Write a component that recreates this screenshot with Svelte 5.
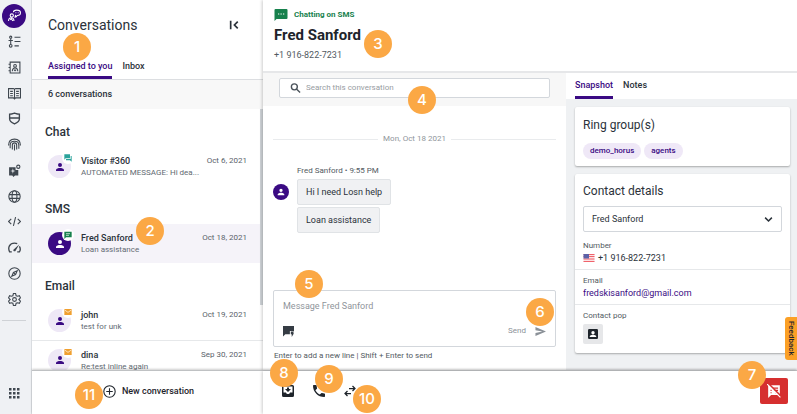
<script>
  let tab = $state('Assigned to you')
  let side_tab = $state('Snapshot')
  let search = $state('')
  let message = $state('')
  let contact = $state('Fred Sanford')

  const groups = [
    {
      title: 'Chat',
      items: [
        { name: 'Visitor #360', text: 'AUTOMATED MESSAGE: Hi dea...', date: 'Oct 6, 2021', kind: 'chat' }
      ]
    },
    {
      title: 'SMS',
      items: [
        { name: 'Fred Sanford', text: 'Loan assistance', date: 'Oct 18, 2021', kind: 'sms', active: true }
      ]
    },
    {
      title: 'Email',
      items: [
        { name: 'john', text: 'test for unk', date: 'Oct 19, 2021', kind: 'mail' },
        { name: 'dina', text: 'Re:test inline again', date: 'Sep 30, 2021', kind: 'mail' }
      ]
    }
  ]

  const messages = ['Hi I need Losn help', 'Loan assistance']

  // tour pins that float over the page
  const pins = [
    { n: 1, x: 77, y: 47 },
    { n: 2, x: 150, y: 231 },
    { n: 3, x: 378, y: 44 },
    { n: 4, x: 422, y: 100 },
    { n: 5, x: 309, y: 284 },
    { n: 6, x: 540, y: 312 },
    { n: 7, x: 752, y: 375 },
    { n: 8, x: 284, y: 373 },
    { n: 9, x: 329, y: 379 },
    { n: 10, x: 367, y: 399 },
    { n: 11, x: 89, y: 395 }
  ]

  const nav = ['Chats', 'Tasks', 'Contacts', 'Library', 'Shield', 'Identity', 'Plugins', 'Web', 'Code', 'Dashboard', 'Explore', 'Settings']
</script>

{#snippet person()}
  <svg viewBox="0 0 24 24"><path fill="currentColor" d="M12 12a4 4 0 1 0 0-8 4 4 0 0 0 0 8zm0 2c-2.700 0-8 1.300-8 4v2h16v-2c0-2.700-5.300-4-8-4z" /></svg>
{/snippet}

{#snippet kindIcon(kind)}
  {#if kind === 'mail'}
    <svg class="kind" viewBox="0 0 24 24"><path fill="#f0a030" d="M1 3h22v18H1z" /><path d="M2 6l10 7 10-7" fill="none" stroke="#fff" stroke-width="2" /></svg>
  {:else if kind === 'sms'}
    <svg class="kind" viewBox="0 0 24 24"><path fill="#17814d" d="M1 2h22v17H6l-5 5z" /><path d="M6 8h12M6 13h9" stroke="#fff" stroke-width="2" /></svg>
  {:else}
    <svg class="kind" viewBox="0 0 24 24"><path fill="#2aa39b" d="M1 1h17v12H5l-4 4zM20 6h3v17l-5-4H6v-4h14z" /></svg>
  {/if}
{/snippet}

{#snippet navIcon(name)}
  <svg viewBox="0 0 24 24" fill="none" stroke="currentColor" stroke-width="2">
    {#if name === 'Chats'}
      <circle cx="7" cy="12" r="3" />
      <path d="M1 22c0-4 2-6 5-6 4 0 5 2 5 6M4 20l2-2 3 4M10 6c0-2 2-4 6-4s7 2 7 5-3 5-6 5c-1 2-3 3-4 3l1-4" />
      <path d="M13 7h1M16 7h1M19 7h1" />
    {:else if name === 'Tasks'}
      <circle cx="5" cy="4" r="2" /><circle cx="5" cy="20" r="2.500" />
      <path d="M5 6v11M1 10h8M12 4h11M12 12h11M12 20h8" />
    {:else if name === 'Contacts'}
      <path d="M4 2h18v20H4zM1 6h4M1 12h4M1 18h4" />
      <circle cx="13" cy="9" r="2.500" /><path d="M8 19c0-4 2-6 5-6s5 2 5 6M11 16l2 2 2-2" />
    {:else if name === 'Library'}
      <path d="M1 3h9l2 1 2-1h9v17h-9l-2 2-2-2H1zM12 4v17M4 8h5M4 12h5M4 16h5M15 8h5M15 12h5M15 16h5" />
    {:else if name === 'Shield'}
      <path d="M3 4c4 0 6-1 9-2 3 1 5 2 9 2v9c0 5-4 7-9 9-5-2-9-4-9-9zM3 11h18" stroke-width="2.500" />
    {:else if name === 'Identity'}
      <path d="M1 14C1 6 6 2 12 2s11 4 11 12M4 19v-6c0-4 3-7 8-7s8 3 8 7v7M8 21v-8c0-2 1-4 4-4s4 2 4 4v8M12 12v11" />
    {:else if name === 'Plugins'}
      <path fill="currentColor" stroke="none" fill-rule="evenodd" d="M2 6h12v5h5v10h-6l-3 3-2-3H2zM9 8l-1 4-4 1 4 1 1 4 1-4 4-1-4-1z" />
      <circle cx="19" cy="5" r="3" />
    {:else if name === 'Web'}
      <circle cx="12" cy="12" r="10.500" /><ellipse cx="12" cy="12" rx="4.500" ry="10.500" /><path d="M2 8.500h20M2 15.500h20" />
    {:else if name === 'Code'}
      <path d="M6 7l-5 5 5 5M18 7l5 5-5 5M14 4l-4 16" />
    {:else if name === 'Dashboard'}
      <path d="M7 20H3C-1 12 3 4 12 4c2 0 3 0 5 1M21 10c2 3 2 7 0 10h-4" stroke-width="2.500" /><path fill="currentColor" stroke="none" d="M21 6l-7 12c-1 2-5 1-4-2z" />
    {:else if name === 'Explore'}
      <circle cx="12" cy="12" r="10.500" /><path d="M17 7l-3 7-7 3 3-7zM11 11l2 2" />
    {:else}
      <path d="M10 1h4l1 4 3 1 3-1 2 4-3 3 3 3-2 4-3-1-3 1-1 4h-4l-1-4-3-1-3 1-2-4 3-3-3-3 2-4 3 1 3-1z" /><circle cx="12" cy="12" r="3.500" />
    {/if}
  </svg>
{/snippet}

<div class="app">
  <nav class="rail">
    <ul>
      {#each nav as name, i}
        <li><button class:current={i === 0} aria-label={name}>{@render navIcon(name)}</button></li>
      {/each}
    </ul>
    <hr />
    <button class="apps" aria-label="Apps">
      <svg viewBox="0 0 24 24" fill="currentColor">
        {#each [2, 10, 18] as y}
          {#each [2, 10, 18] as x}
            <rect {x} {y} width="5" height="5" />
          {/each}
        {/each}
      </svg>
    </button>
  </nav>

  <div class="content">
    <div class="workspace">
      <section class="list">
        <header>
          <h1>Conversations</h1>
          <button class="collapse" aria-label="Collapse">
            <svg viewBox="0 0 24 24" fill="none" stroke="currentColor" stroke-width="4"><path d="M4 2v20M21 4l-8 8 8 8" /></svg>
          </button>
        </header>
        <div class="tabs">
          {#each ['Assigned to you', 'Inbox'] as t}
            <button class:selected={tab === t} onclick={() => (tab = t)}>{t}</button>
          {/each}
        </div>
        <p class="count">6 conversations</p>
        <div class="scroll">
          {#each groups as g}
            <h2>{g.title}</h2>
            {#each g.items as c}
              <a class="conversation" class:active={c.active} href="#{c.kind}">
                <span class="avatar">
                  {@render person()}
                  <span class="badge">{@render kindIcon(c.kind)}</span>
                </span>
                <span class="summary">
                  <strong>{c.name}</strong>
                  <span>{c.text}</span>
                </span>
                <time>{c.date}</time>
              </a>
            {/each}
          {/each}
          <div class="thumb"></div>
        </div>
      </section>

      <main>
        <header class="contact">
          <p class="channel">
            <svg viewBox="0 0 26 24"><path fill="#17814d" d="M2 0h22q2 0 2 2v16q0 2-2 2H4l-4 4V2q0-2 2-2z" /><path d="M7 10h2.500M12 10h2.500M17 10h2.500" stroke="#fff" stroke-width="2" /></svg>
            Chatting on SMS
          </p>
          <h2>Fred Sanford</h2>
          <p class="phone">+1 916-822-7231</p>
        </header>

        <div class="columns">
          <section class="chat">
            <div class="search">
              <label>
                <svg viewBox="0 0 24 24" fill="none" stroke="currentColor" stroke-width="3"><circle cx="9.500" cy="9.500" r="6.500" /><path d="M14 14l8 8" /></svg>
                <input type="text" aria-label="Search" placeholder="Search this conversation" bind:value={search} />
              </label>
            </div>
            <p class="day">Mon, Oct 18 2021</p>
            <div class="thread">
              <span class="sender">{@render person()}</span>
              <div class="bubbles">
                <p class="meta">Fred Sanford • 9:55 PM</p>
                {#each messages as m}
                  <p class="bubble">{m}</p>
                {/each}
              </div>
            </div>
            <div class="composer">
              <textarea aria-label="Message" placeholder="Message Fred Sanford" bind:value={message}></textarea>
              <div class="tools">
                <button aria-label="Canned replies">
                  <svg viewBox="0 0 24 24"><path fill="#353c44" d="M0 0h24v11h-9v7H5l-5 5z" /><path fill="#353c44" d="M17 12h7l-2 4h2l-5 8v-6h-2z" /></svg>
                </button>
                <button class="send">
                  Send
                  <svg viewBox="0 0 24 24"><path fill="currentColor" d="M1 22l23-10L1 2v7l15 3-15 3z" /></svg>
                </button>
              </div>
            </div>
            <p class="hint">Enter to add a new line | Shift + Enter to send</p>
          </section>

          <aside>
            <div class="tabs">
              {#each ['Snapshot', 'Notes'] as t}
                <button class:selected={side_tab === t} onclick={() => (side_tab = t)}>{t}</button>
              {/each}
            </div>
            <div class="cards">
              <div class="card rings">
                <h3>Ring group(s)</h3>
                <div class="chips">
                  <span>demo_horus</span>
                  <span>agents</span>
                </div>
              </div>
              <div class="card">
                <div class="block">
                  <h3>Contact details</h3>
                  <div class="picker">
                    <select aria-label="Contact" bind:value={contact}>
                      <option>Fred Sanford</option>
                    </select>
                    <svg viewBox="0 0 24 24" fill="none" stroke="currentColor" stroke-width="4"><path d="M3 7l9 9 9-9" /></svg>
                  </div>
                  <h4>Number</h4>
                  <p class="value">
                    <svg class="flag" viewBox="0 0 22 16">
                      <rect width="22" height="16" fill="#fbe3e5" />
                      <path d="M0 1h22M0 5h22M0 10h22M0 15h22" stroke="#f0636b" stroke-width="2" />
                      <rect width="11" height="9" fill="#5b62a8" />
                    </svg>
                    +1 916-822-7231
                  </p>
                </div>
                <div class="block">
                  <h4>Email</h4>
                  <p class="value"><a href="mailto:fredskisanford@gmail.com">fredskisanford@gmail.com</a></p>
                </div>
                <div class="block">
                  <h4>Contact pop</h4>
                  <button class="pop" aria-label="Contact pop">
                    <svg viewBox="0 0 24 24"><rect width="24" height="24" rx="3" fill="#1e242b" /><circle cx="12" cy="9" r="4" fill="#fff" /><path fill="#fff" d="M4 19c0-3 4-5 8-5s8 2 8 5z" /></svg>
                  </button>
                </div>
              </div>
            </div>
          </aside>
        </div>
      </main>
    </div>

    <footer>
      <div class="create">
        <button>
          <svg viewBox="0 0 24 24" fill="none" stroke="currentColor" stroke-width="2"><circle cx="12" cy="12" r="10.500" /><path d="M12 6v12M6 12h12" /></svg>
          New conversation
        </button>
      </div>
      <div class="actions">
        <button aria-label="Move to inbox">
          <svg viewBox="0 0 24 24"><path fill="currentColor" fill-rule="evenodd" d="M3 0h18q3 0 3 3v18q0 3-3 3H3q-3 0-3-3V3q0-3 3-3zM3 3v12h5c1 4 7 4 8 0h5V3zM10 5h4v3h4l-6 6-6-6h4z" /></svg>
        </button>
        <button aria-label="Call">
          <svg viewBox="3 3 18 18"><path fill="currentColor" d="M6.600 10.800c1.400 2.800 3.800 5.100 6.600 6.600l2.200-2.200c.3-.3.7-.4 1-.2 1.100.4 2.300.6 3.600.6.600 0 1 .4 1 1V20c0 .6-.4 1-1 1C10.600 21 3 13.400 3 4c0-.6.4-1 1-1h3.500c.6 0 1 .4 1 1 0 1.300.2 2.500.6 3.600.1.300 0 .7-.2 1z" /></svg>
        </button>
        <button aria-label="Transfer">
          <svg viewBox="0 0 24 24" fill="none" stroke="currentColor" stroke-width="2.500"><path d="M10 7h12M17 2l5 5-5 5M14 17H2M7 12l-5 5 5 5" /></svg>
        </button>
        <button class="end" aria-label="End chat">
          <svg viewBox="0 0 24 24"><path fill="#fff" d="M2 2h20v17H7l-5 5z" /><path d="M10 7h9M11 11h8M6 11h2M6 15h2M14 15h2" stroke="#d62f2f" stroke-width="2" /><path d="M3 0l21 21" stroke="#d62f2f" stroke-width="3" /><path d="M0 0l23 23" stroke="#fff" stroke-width="2" /></svg>
        </button>
      </div>
    </footer>
  </div>

  <button class="feedback">Feedback</button>

  {#each pins as p}
    <span class="pin" style="left: {p.x}px; top: {p.y}px">{p.n}</span>
  {/each}
</div>

<style>
  :global(body) {
    font-family: Roboto, 'Liberation Sans', sans-serif;
    font-size: 9px;
    line-height: 12px;
    color: #2b323a;
  }

  h1, h2, h3, h4, p, ul, hr {
    margin: 0;
    padding: 0;
  }

  button {
    display: flex;
    align-items: center;
    padding: 0;
    border: 0;
    background: none;
    color: inherit;
    font: inherit;
    cursor: pointer;
  }

  svg {
    display: block;
    width: 12px;
    height: 12px;
    flex: none;
  }

  .app {
    position: relative;
    display: flex;
    height: 100vh;
    overflow: hidden;
  }

  .rail {
    display: flex;
    flex-direction: column;
    align-items: center;
    width: 32px;
    flex: none;
    box-sizing: border-box;
    padding: 3px 3px 15px 0;
    background: #eff1f4;
    border-right: 1px solid #d9dce0;
    color: #3f474f;
  }

  .rail ul {
    display: flex;
    flex-direction: column;
    height: 309px;
    list-style: none;
  }

  .rail li {
    display: flex;
    flex: 1;
    align-items: center;
    justify-content: center;
  }

  .rail li svg {
    width: 13px;
    height: 13px;
  }

  .rail .current {
    justify-content: center;
    width: 24px;
    height: 24px;
    border-radius: 50%;
    background: #3a0a83;
    color: #fff;
  }

  .rail hr {
    width: 24px;
    margin-top: 8px;
    border: 0;
    border-top: 1px solid #cfd2d6;
  }

  .apps {
    margin-top: auto;
  }

  .content {
    display: flex;
    flex: 1;
    flex-direction: column;
    min-width: 0;
  }

  .workspace {
    display: flex;
    flex: 1;
    min-height: 0;
  }

  .list {
    display: flex;
    flex-direction: column;
    width: 231px;
    flex: none;
  }

  .list header {
    display: flex;
    align-items: center;
    justify-content: space-between;
    padding: 14px 24px 14px 16px;
  }

  h1 {
    font-size: 14px;
    line-height: 22px;
    font-weight: 400;
  }

  .collapse svg {
    width: 10px;
    height: 10px;
  }

  .tabs {
    display: flex;
    gap: 10px;
    font-weight: 500;
  }

  .tabs button {
    align-items: flex-start;
    box-sizing: border-box;
    border-bottom: 3px solid transparent;
  }

  .tabs .selected {
    color: #3a0a83;
    border-color: #3a0a83;
  }

  .list .tabs {
    padding: 10px 16px 0;
    border-bottom: 1px solid #dcdee1;
  }

  .list .tabs button {
    height: 19px;
  }

  .count {
    padding: 8px 16px 9px;
    background: #f8f8f8;
    font-weight: 500;
  }

  .scroll {
    position: relative;
    flex: 1;
    min-height: 0;
    overflow: hidden;
  }

  .scroll h2 {
    padding: 16px 13px 8px;
    font-size: 12px;
    line-height: 14px;
    font-weight: 500;
  }

  .thumb {
    position: absolute;
    top: 0;
    right: 0;
    width: 3px;
    height: 75%;
    background: #cfd3d7;
  }

  .conversation {
    display: flex;
    align-items: center;
    gap: 10px;
    height: 39px;
    box-sizing: border-box;
    padding: 0 16px;
    color: inherit;
    text-decoration: none;
  }

  .conversation + .conversation {
    border-top: 1px solid #e6e8ea;
  }

  .conversation.active {
    background: #f5f3f9;
  }

  .avatar {
    position: relative;
    display: flex;
    align-items: center;
    justify-content: center;
    width: 23px;
    height: 23px;
    border-radius: 50%;
    background: #eee8f6;
    color: #3a0a83;
  }

  .active .avatar {
    background: #3a0a83;
    color: #fff;
  }

  .badge {
    position: absolute;
    top: -3px;
    right: -3px;
    padding: 2px;
    border-radius: 50%;
    background: #fff;
  }

  .kind {
    width: 8px;
    height: 8px;
  }

  .summary {
    display: flex;
    flex: 1;
    flex-direction: column;
    min-width: 0;
    padding-top: 1px;
    font-size: 8px;
    color: #626a72;
  }

  .summary strong {
    font-size: 9px;
    font-weight: 500;
    color: #2b323a;
  }

  .summary span {
    white-space: nowrap;
  }

  time {
    align-self: flex-start;
    padding-top: 8px;
    font-size: 8px;
    color: #5a626a;
  }

  main {
    position: relative;
    display: flex;
    flex: 1;
    flex-direction: column;
    min-width: 0;
    box-shadow: -1px 0 3px rgba(0, 0, 0, 0.2);
  }

  .contact {
    padding: 9px 11px 10px;
    border-bottom: 2px solid #e6e7e9;
  }

  .channel {
    display: flex;
    align-items: center;
    gap: 6px;
    font-size: 8px;
    font-weight: 700;
    color: #17814d;
  }

  .channel svg {
    width: 14px;
  }

  .contact h2 {
    margin-top: 3px;
    font-size: 15px;
    line-height: 22px;
    font-weight: 700;
    color: #1e242b;
  }

  .phone {
    margin-top: 3px;
    color: #525a62;
  }

  .columns {
    display: flex;
    flex: 1;
    min-height: 0;
  }

  .chat {
    display: flex;
    flex: 1;
    flex-direction: column;
    min-width: 0;
  }

  .search {
    padding: 5px 16px 8px;
    background: #f7f7f7;
  }

  .search label {
    display: flex;
    align-items: center;
    gap: 5px;
    padding: 3px 10px;
    border: 1px solid #d3d7dc;
    border-radius: 2px;
    background: #fff;
    color: #4a525a;
  }

  .search label svg {
    width: 11px;
  }

  input, textarea {
    flex: 1;
    min-width: 0;
    padding: 0;
    border: 0;
    outline: 0;
    background: none;
    font: inherit;
    color: inherit;
  }

  input {
    font-size: 8px;
  }

  input::placeholder {
    color: #979ca2;
  }

  .day {
    display: flex;
    align-items: center;
    gap: 5px;
    padding: 27px 10px 0;
    font-size: 8px;
    color: #8f959b;
  }

  .day::before, .day::after {
    content: '';
    flex: 1;
    border-top: 1px solid #e9ebed;
  }

  .thread {
    display: flex;
    align-items: flex-start;
    gap: 8px;
    padding: 20px 10px 0;
  }

  .sender {
    display: flex;
    align-items: center;
    justify-content: center;
    width: 16px;
    height: 16px;
    margin-top: 19px;
    border-radius: 50%;
    background: #3a0a83;
    color: #fff;
  }

  .sender svg {
    width: 10px;
  }

  .bubbles {
    display: flex;
    flex-direction: column;
    align-items: flex-start;
    gap: 2px;
  }

  .meta {
    font-size: 8px;
    color: #525a62;
  }

  .bubble {
    padding: 6px 8px;
    border: 1px solid #e0e3e6;
    border-radius: 2px;
    background: #f0f1f3;
  }

  .composer {
    display: flex;
    flex-direction: column;
    margin: auto 10px 0;
    padding: 9px 9px 8px;
    border: 1px solid #d3d7dc;
    border-radius: 2px;
  }

  textarea {
    flex: none;
    height: 24px;
    resize: none;
  }

  textarea::placeholder {
    color: #8f959b;
  }

  .tools {
    display: flex;
    justify-content: space-between;
    height: 14px;
  }

  .tools svg {
    width: 11px;
    height: 11px;
  }

  .send {
    gap: 9px;
    font-size: 8px;
    color: #8b9198;
  }

  .hint {
    padding: 3px 11px 8px;
    font-size: 8px;
    color: #525a62;
  }

  aside {
    width: 231px;
    flex: none;
    display: flex;
    flex-direction: column;
    background: #eff1f3;
  }

  aside .tabs {
    padding: 6px 9px 0;
    background: #fff;
  }

  aside .tabs button {
    height: 20px;
  }

  .cards {
    display: flex;
    flex-direction: column;
    gap: 8px;
    padding: 8px 7px 16px 9px;
  }

  .card {
    border-radius: 2px;
    background: #fff;
    box-shadow: 0 1px 2px rgba(0, 0, 0, 0.3);
  }

  .rings {
    padding: 10px 8px 7px;
  }

  h3 {
    font-size: 12px;
    line-height: 16px;
    font-weight: 400;
  }

  h4 {
    font-size: 8px;
    font-weight: 400;
    color: #525a62;
  }

  .chips {
    display: flex;
    gap: 3px;
    margin-top: 10px;
  }

  .chips span {
    padding: 2px 7px;
    border-radius: 8px;
    background: #efe8f7;
    font-size: 8px;
    font-weight: 500;
    color: #3a0a83;
  }

  .block {
    padding: 5px 8px;
  }

  .block:first-child {
    padding-top: 9px;
  }

  .block:last-child {
    padding-bottom: 9px;
  }

  .block + .block {
    border-top: 1px solid #e6e8ea;
  }

  .picker {
    position: relative;
    margin: 7px 0 8px;
  }

  .picker svg {
    position: absolute;
    top: 9px;
    right: 9px;
    width: 9px;
    height: 9px;
    pointer-events: none;
  }

  select {
    appearance: none;
    width: 100%;
    padding: 6px 8px;
    border: 1px solid #d3d7dc;
    border-radius: 2px;
    background: #fff;
    font: inherit;
    color: inherit;
  }

  .value {
    display: flex;
    align-items: center;
    gap: 3px;
  }

  .value a {
    color: #3a0a83;
    text-decoration: none;
  }

  .flag {
    height: 8px;
  }

  .pop {
    justify-content: center;
    width: 20px;
    height: 20px;
    margin-top: 2px;
    border-radius: 2px;
    background: #e6e7e9;
  }

  .pop svg {
    width: 10px;
    height: 10px;
  }

  footer {
    position: relative;
    display: flex;
    flex: none;
    height: 43px;
    border-top: 1px solid #bfc1c3;
    background: #fff;
    box-shadow: 0 -1px 2px rgba(0, 0, 0, 0.2);
  }

  .create {
    display: flex;
    align-items: center;
    justify-content: center;
    width: 231px;
    flex: none;
    box-sizing: border-box;
    padding: 0 0 3px 2px;
  }

  .create svg {
    width: 13px;
    height: 13px;
  }

  .create button {
    gap: 6px;
    font-weight: 500;
    color: #1e242b;
  }

  .actions {
    display: flex;
    flex: 1;
    align-items: center;
    gap: 19px;
    padding: 0 9px 3px 19px;
    color: #1e242b;
    box-shadow: -1px 0 3px rgba(0, 0, 0, 0.2);
  }

  .end {
    justify-content: center;
    width: 28px;
    height: 26px;
    margin-left: auto;
    border-radius: 2px;
    background: #d62f2f;
  }

  .end svg {
    width: 14px;
    height: 14px;
  }

  .feedback {
    position: absolute;
    right: 0;
    bottom: 54px;
    width: 12px;
    height: 43px;
    justify-content: center;
    border-radius: 3px 0 0 3px;
    background: #fba026;
    font-size: 8px;
    font-weight: 500;
    color: #1e242b;
    writing-mode: vertical-rl;
  }

  .pin {
    position: absolute;
    display: flex;
    align-items: center;
    justify-content: center;
    width: 28px;
    height: 28px;
    margin: -14px 0 0 -14px;
    border-radius: 50%;
    background: #fba845;
    font-family: Inter, sans-serif;
    font-size: 15px;
    font-weight: 500;
    color: #fff;
  }
</style>
